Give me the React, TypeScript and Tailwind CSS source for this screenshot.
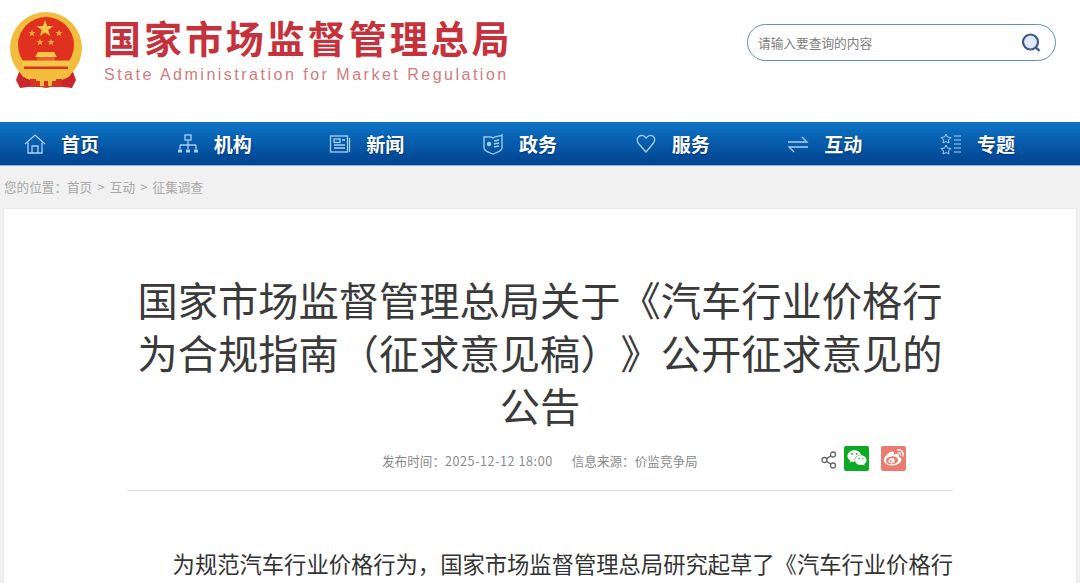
import type { ReactNode } from "react"
import { FaWeibo, FaWeixin } from "react-icons/fa"

const cjk = "font-['Noto_Sans_CJK_SC','Noto_Sans',sans-serif]"

function Emblem() {
  return (
    <svg width="76" height="80" viewBox="8 10 76 80" className="shrink-0">
      <path d="M22 64 L16 80 L20 88 L36 86 L46 88 L56 86 L72 88 L76 80 L70 64 Z" fill="#c9262c" />
      <circle cx="46" cy="48" r="36" fill="#f2bd3d" />
      <circle cx="46" cy="45" r="28" fill="#e0301e" />
      <path d="M18 52 C22 70 34 78 46 78 C58 78 70 70 74 52 L70 66 L22 66 Z" fill="#f2bd3d" />
      <polygon points="45,20 47,26 53.5,26 48.2,30 50.2,36 45,32.4 39.8,36 41.8,30 36.5,26 43,26" fill="#f6c945" />
      <polygon points="32,29.5 33,32 35.5,32 33.5,33.7 34.2,36.2 32,34.8 29.8,36.2 30.5,33.7 28.5,32 31,32" fill="#f0a83a" />
      <polygon points="59,29.5 60,32 62.5,32 60.5,33.7 61.2,36.2 59,34.8 56.8,36.2 57.5,33.7 55.5,32 58,32" fill="#f0a83a" />
      <polygon points="40,38.5 41,41 43.5,41 41.5,42.7 42.2,45.2 40,43.8 37.8,45.2 38.5,42.7 36.5,41 39,41" fill="#f0a83a" />
      <polygon points="51,38.5 52,41 54.5,41 52.5,42.7 53.2,45.2 51,43.8 48.8,45.2 49.5,42.7 47.5,41 50,41" fill="#f0a83a" />
      <path d="M38 52 H54 L57 57 H35 Z" fill="#f4c64a" />
      <rect x="37" y="57" width="18" height="3.5" fill="#e8602f" />
      <rect x="22" y="60.5" width="48" height="6" fill="#f4c64a" />
      <rect x="24" y="66.5" width="44" height="2.5" fill="#e0301e" />
      <path d="M20 68 C26 78 33 68 38 73 C42 70 50 70 54 73 C59 68 66 78 72 68 L70 76 C62 82 58 76 54 78 L38 78 C34 76 30 82 22 76 Z" fill="#f2bd3d" />
      <path d="M30 79 H62 V87 H30 Z" fill="#d92f25" />
      <path d="M36 78 H56 V81 H52 V86 H48 V81 H44 V86 H40 V81 H36 Z" fill="#f2bd3d" />
    </svg>
  )
}

function Stroke({ children }: { children: ReactNode }) {
  return (
    <svg width="22" height="22" viewBox="0 0 22 22" fill="none" stroke="#a9d0f2" strokeWidth="1.3" className="shrink-0">
      {children}
    </svg>
  )
}

const navItems: { label: string; icon: ReactNode }[] = [
  {
    label: "首页",
    icon: (
      <Stroke>
        <path d="M1 11 L11 2 L21 11" />
        <path d="M4 9.5 V20 H18 V9.5" />
        <path d="M8 20 V13 H14 V20" />
      </Stroke>
    ),
  },
  {
    label: "机构",
    icon: (
      <Stroke>
        <rect x="8" y="2" width="6" height="5" />
        <path d="M11 7 V12 M3 12 H19 M3 12 V16 M11 12 V16 M19 12 V16" />
        <path d="M1 18 H5 M9 18 H13 M17 18 H21" strokeWidth="3" />
      </Stroke>
    ),
  },
  {
    label: "新闻",
    icon: (
      <Stroke>
        <rect x="1.5" y="3" width="17" height="16" />
        <rect x="5" y="6" width="6" height="3.5" />
        <path d="M13 7 H16 M5 12 H16 M5 15 H16 M20.5 5 V19" />
      </Stroke>
    ),
  },
  {
    label: "政务",
    icon: (
      <Stroke>
        <path d="M2 4 C6 4 9 3 11 5 C13 3 17 4 20 2 V15 C20 18 14 20 11 21 C8 20 2 18 2 15 Z" />
        <circle cx="7" cy="11" r="1.6" fill="#a9d0f2" />
        <path d="M12 8 L17 7 M12 11 L17 10 M12 14 L17 13" />
      </Stroke>
    ),
  },
  {
    label: "服务",
    icon: (
      <Stroke>
        <path d="M11 19 L3.5 10.5 C1 7 2.5 3 6 2.5 C8 2.3 10 3.2 11 5 C13 3 16 1.8 18 3.2 C20.2 5 19.8 8 18.5 10 Z" />
      </Stroke>
    ),
  },
  {
    label: "互动",
    icon: (
      <Stroke>
        <path d="M1 9 H20 L15 4 M21 14 H2 L7 19" />
      </Stroke>
    ),
  },
  {
    label: "专题",
    icon: (
      <Stroke>
        <polygon points="6,1 7.5,4 11,4.5 8.5,7 9,10 6,8.5 3,10 3.5,7 1,4.5 4.5,4" strokeWidth="1" />
        <polygon points="6,12 7.5,15 11,15.5 8.5,18 9,21 6,19.5 3,21 3.5,18 1,15.5 4.5,15" strokeWidth="1" />
        <path d="M14 3 H21 M14 7 H21 M14 11 H21 M14 15 H21 M14 19 H21" strokeWidth="1.1" />
      </Stroke>
    ),
  },
]

export default function App() {
  return (
    <div className={`h-[583px] w-[1080px] overflow-hidden bg-white ${cjk}`}>
      {/* Header */}
      <header className="flex h-[122px] items-start bg-white">
        <div className="ml-[8px] mt-[10px]">
          <Emblem />
        </div>
        <div className="ml-[19px] mt-[12px] w-[420px]">
          <div className="whitespace-nowrap text-[38px] font-bold leading-[50px] tracking-[2.95px] text-[#c6323b]">
            国家市场监督管理总局
          </div>
          <div className="mt-[4px] whitespace-nowrap pl-px font-['Liberation_Sans',sans-serif] text-[16px] leading-[18px] tracking-[2.5px] text-[#d07c80]">
            State Administration for Market Regulation
          </div>
        </div>
        <div className="ml-[224px] mt-[24px] flex h-[37px] w-[309px] items-center justify-between rounded-full border border-[#5b93ae] pl-[10px] pr-[13px]">
          <span className="pt-px text-[12.7px] text-[#7d7d7d]">请输入要查询的内容</span>
          <svg width="22" height="22" viewBox="0 0 22 22" fill="none">
            <circle cx="10.5" cy="10" r="7.5" fill="#dfe8f6" stroke="#37598f" strokeWidth="2.2" />
            <path d="M16 15.5 L19.5 19" stroke="#37598f" strokeWidth="2.4" />
          </svg>
        </div>
      </header>

      {/* Nav */}
      <nav className="grid h-[44px] grid-cols-[repeat(7,152.67px)] border-b border-[#8db9e6] bg-gradient-to-b from-[#0f74c6] to-[#02438f] pl-[24px]">
        {navItems.map((item) => (
          <div key={item.label} className="flex items-center gap-[15px]">
            {item.icon}
            <span className="pt-[2px] text-[19px] font-bold text-white [text-shadow:0_1px_2px_rgba(0,30,80,0.6)]">
              {item.label}
            </span>
          </div>
        ))}
      </nav>

      {/* Breadcrumb */}
      <div className="bg-[#f1f1f1] px-[3px]">
        <div className="flex h-[42px] items-center pl-px pt-px text-[12.6px] text-[#a8a8a8] [word-spacing:2.5px]">
          您的位置：首页 &gt; 互动 &gt; 征集调查
        </div>
        {/* Article card */}
        <main className="h-[420px] border border-[#e8e8e8] bg-white px-[123px] pt-[63px]">
          <h1 className="px-[10px] text-center text-[40.25px] font-normal leading-[53px] text-[#3a3a3a] [text-spacing-trim:space-all]">
            国家市场监督管理总局关于《汽车行业价格行为合规指南（征求意见稿）》公开征求意见的公告
          </h1>
          <div className="mt-[9px] flex h-[51px] items-center border-b border-[#dcdcdc] pb-[8px] pl-[255px] text-[12.6px] text-[#8a8a8a]">
            <span>
              发布时间：<span className="tracking-[0.55px]">2025-12-12 18:00</span>
            </span>
            <span className="ml-[19px]">信息来源：价监竞争局</span>
            <div className="mb-[6px] ml-auto mr-[47px] flex items-center">
              <svg width="16" height="18" viewBox="0 0 16 18" fill="none" stroke="#666" strokeWidth="1.3" className="mr-[7px] mt-[4px]">
                <circle cx="3.5" cy="9" r="2.5" />
                <circle cx="12" cy="3.5" r="2.5" />
                <circle cx="12" cy="14.5" r="2.5" />
                <path d="M5.7 7.6 L9.8 4.9 M5.7 10.4 L9.8 13.1" />
              </svg>
              <span className="flex h-[25px] w-[25px] items-center justify-center rounded-[2px] bg-[#0ca925] text-white">
                <FaWeixin size={20} />
              </span>
              <span className="ml-[12px] flex h-[25px] w-[25px] items-center justify-center rounded-[2px] bg-[#ec7b6f] text-white">
                <FaWeibo size={20} />
              </span>
            </div>
          </div>
          <p className="mt-[52px] whitespace-nowrap pl-px indent-[2em] text-[22.3px] leading-[40px] text-[#333] [text-spacing-trim:space-all]">
            为规范汽车行业价格行为，国家市场监督管理总局研究起草了《汽车行业价格行
          </p>
        </main>
      </div>
    </div>
  )
}
